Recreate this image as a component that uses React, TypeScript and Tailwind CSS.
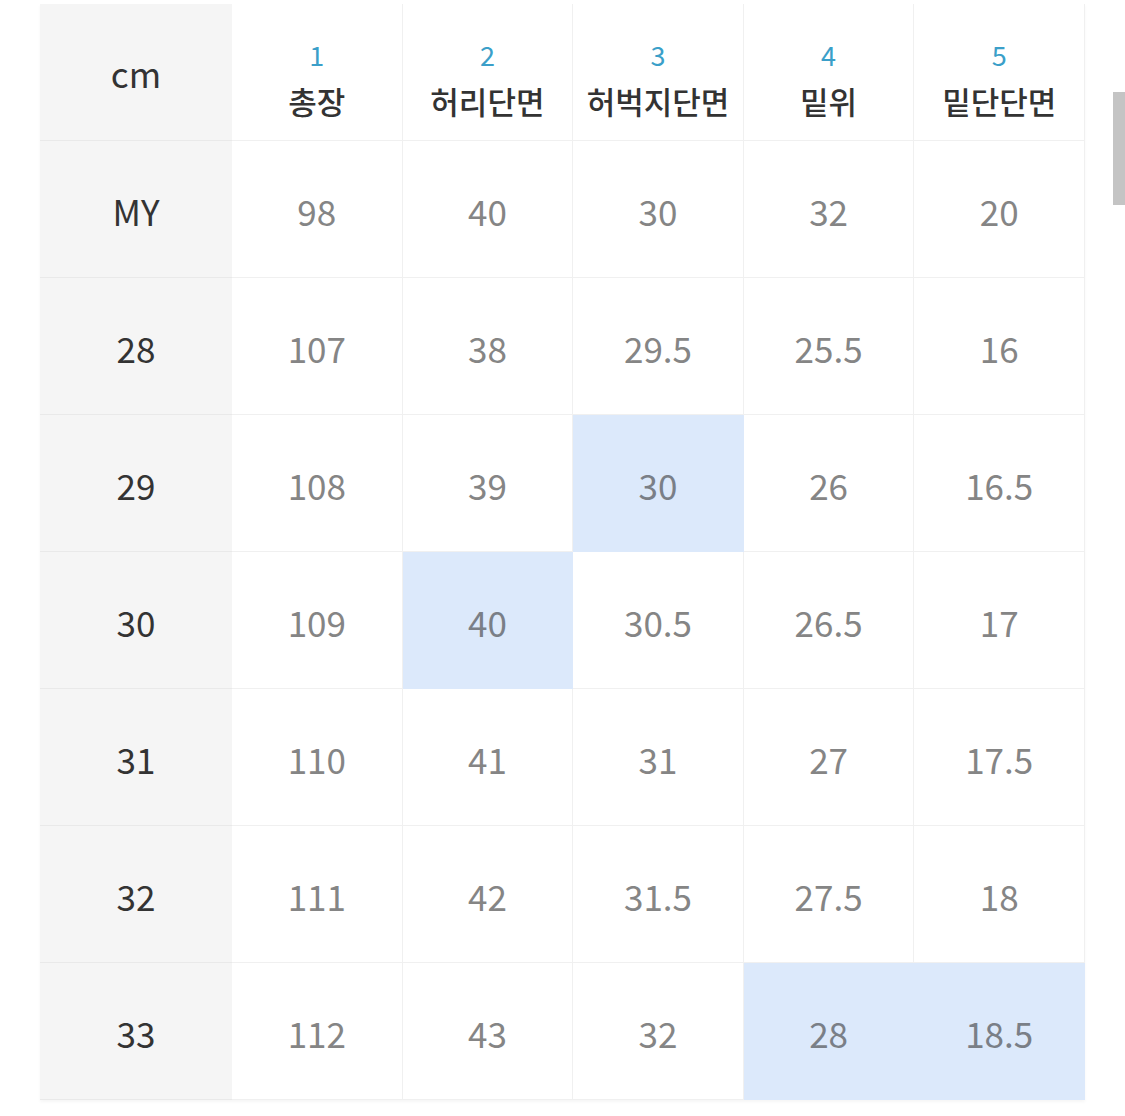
const headers = [
  { no: "1", label: "총장" },
  { no: "2", label: "허리단면" },
  { no: "3", label: "허벅지단면" },
  { no: "4", label: "밑위" },
  { no: "5", label: "밑단단면" },
];

// size rows, highlighted cell indexes per row
const rows: { size: string; values: string[]; hl: number[] }[] = [
  { size: "MY", values: ["98", "40", "30", "32", "20"], hl: [] },
  { size: "28", values: ["107", "38", "29.5", "25.5", "16"], hl: [] },
  { size: "29", values: ["108", "39", "30", "26", "16.5"], hl: [2] },
  { size: "30", values: ["109", "40", "30.5", "26.5", "17"], hl: [1] },
  { size: "31", values: ["110", "41", "31", "27", "17.5"], hl: [] },
  { size: "32", values: ["111", "42", "31.5", "27.5", "18"], hl: [] },
  { size: "33", values: ["112", "43", "32", "28", "18.5"], hl: [3, 4] },
];

const font = { fontFamily: '"Noto Sans CJK KR", "Noto Sans", sans-serif' };

export default function App() {
  return (
    <div className="relative w-[1125px] h-[1116px] bg-white overflow-hidden" style={font}>
      <div className="pt-[4px] pl-[40px]">
        <div className="w-[1045px] grid grid-cols-[192px_repeat(5,1fr)] shadow-[0_2px_3px_rgba(0,0,0,0.04)]">
          {/* header row */}
          <div className="h-[137px] bg-[#f5f5f5] border-b border-[#e9e9e9] flex items-center justify-center pt-[2px] text-[35px] text-[#333]">
            cm
          </div>
          {headers.map((h) => (
            <div
              key={h.no}
              className="h-[137px] bg-white border-b border-r border-[#f0f0f0] flex flex-col items-center justify-center pt-[12px]"
            >
              <span className="text-[27px] leading-[46px] text-[#3b9fc9]">{h.no}</span>
              <span className="text-[31px] leading-[46px] font-medium text-[#333]">{h.label}</span>
            </div>
          ))}

          {/* data rows */}
          {rows.map((r) => (
            <div key={r.size} className="contents">
              <div className="h-[137px] bg-[#f5f5f5] border-b border-[#e9e9e9] flex items-center justify-center pt-[4px] text-[35px] text-[#333]">
                {r.size}
              </div>
              {r.values.map((v, i) => (
                <div
                  key={i}
                  className={
                    r.hl.includes(i)
                      ? "h-[137px] bg-[#dce9fb] border-b border-r border-[#dce9fb] flex items-center justify-center pt-[4px] text-[35px] text-[#7a7f87]"
                      : "h-[137px] bg-white border-b border-r border-[#f0f0f0] flex items-center justify-center pt-[4px] text-[35px] text-[#858585]"
                  }
                >
                  {v}
                </div>
              ))}
            </div>
          ))}
        </div>
      </div>

      {/* scrollbar thumb */}
      <div className="absolute right-0 top-[92px] w-[12px] h-[113px] bg-[#c4c4c4]" />
    </div>
  );
}
